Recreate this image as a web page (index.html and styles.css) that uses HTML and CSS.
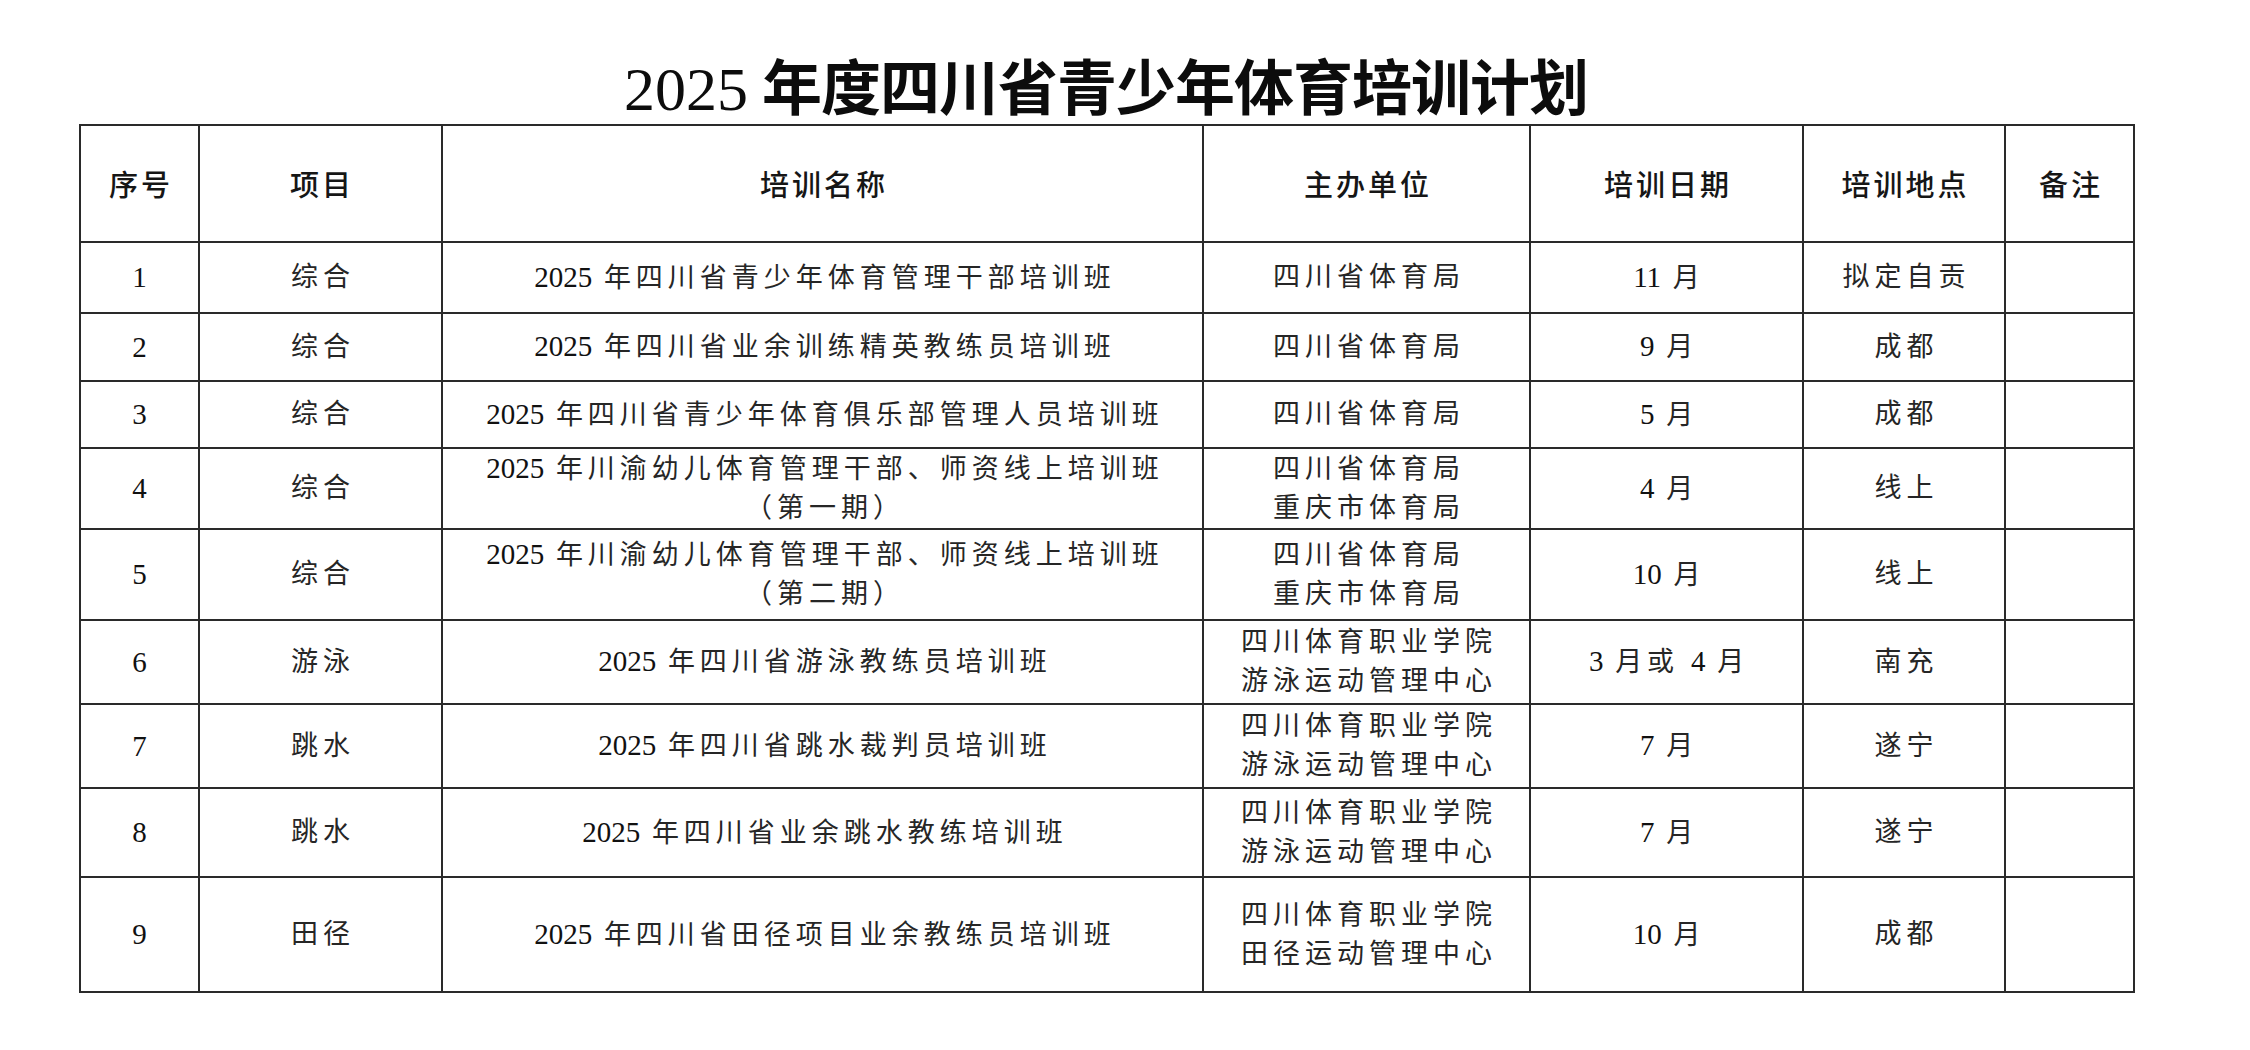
FILE: index.html
```html
<!DOCTYPE html>
<html lang="zh-CN">
<head>
<meta charset="utf-8">
<title>2025年度四川省青少年体育培训计划</title>
<link rel="stylesheet" href="styles.css">
</head>
<body>
<div class="page">
  <h1 class="title"><span class="yr">2025</span> 年度四川省青少年体育培训计划</h1>
  <table class="plan">
    <colgroup>
      <col class="c-no"><col class="c-item"><col class="c-name"><col class="c-org"><col class="c-date"><col class="c-place"><col class="c-note">
    </colgroup>
    <thead>
      <tr class="r-head">
        <th>序号</th><th>项目</th><th>培训名称</th><th>主办单位</th><th>培训日期</th><th>培训地点</th><th>备注</th>
      </tr>
    </thead>
    <tbody>
      <tr class="r1">
        <td class="num">1</td><td>综合</td><td><span class="d">2025</span> 年四川省青少年体育管理干部培训班</td><td>四川省体育局</td><td><span class="d">11</span> 月</td><td>拟定自贡</td><td></td>
      </tr>
      <tr class="r2">
        <td class="num">2</td><td>综合</td><td><span class="d">2025</span> 年四川省业余训练精英教练员培训班</td><td>四川省体育局</td><td><span class="d">9</span> 月</td><td>成都</td><td></td>
      </tr>
      <tr class="r3">
        <td class="num">3</td><td>综合</td><td><span class="d">2025</span> 年四川省青少年体育俱乐部管理人员培训班</td><td>四川省体育局</td><td><span class="d">5</span> 月</td><td>成都</td><td></td>
      </tr>
      <tr class="r4">
        <td class="num">4</td><td>综合</td><td class="ml"><span class="d">2025</span> 年川渝幼儿体育管理干部、师资线上培训班<br>（第一期）</td><td class="ml">四川省体育局<br>重庆市体育局</td><td><span class="d">4</span> 月</td><td>线上</td><td></td>
      </tr>
      <tr class="r5">
        <td class="num">5</td><td>综合</td><td class="ml"><span class="d">2025</span> 年川渝幼儿体育管理干部、师资线上培训班<br>（第二期）</td><td class="ml">四川省体育局<br>重庆市体育局</td><td><span class="d">10</span> 月</td><td>线上</td><td></td>
      </tr>
      <tr class="r6">
        <td class="num">6</td><td>游泳</td><td><span class="d">2025</span> 年四川省游泳教练员培训班</td><td class="ml">四川体育职业学院<br>游泳运动管理中心</td><td><span class="d">3</span> 月或 <span class="d">4</span> 月</td><td>南充</td><td></td>
      </tr>
      <tr class="r7">
        <td class="num">7</td><td>跳水</td><td><span class="d">2025</span> 年四川省跳水裁判员培训班</td><td class="ml">四川体育职业学院<br>游泳运动管理中心</td><td><span class="d">7</span> 月</td><td>遂宁</td><td></td>
      </tr>
      <tr class="r8">
        <td class="num">8</td><td>跳水</td><td><span class="d">2025</span> 年四川省业余跳水教练培训班</td><td class="ml">四川体育职业学院<br>游泳运动管理中心</td><td><span class="d">7</span> 月</td><td>遂宁</td><td></td>
      </tr>
      <tr class="r9">
        <td class="num">9</td><td>田径</td><td><span class="d">2025</span> 年四川省田径项目业余教练员培训班</td><td class="ml">四川体育职业学院<br>田径运动管理中心</td><td><span class="d">10</span> 月</td><td>成都</td><td></td>
      </tr>
    </tbody>
  </table>
</div>
</body>
</html>
```

FILE: styles.css
```css
html, body {
  margin: 0;
  padding: 0;
  background: #ffffff;
}

.page {
  width: 2250px;
  height: 1050px;
  overflow: hidden;
  padding-left: 79px;
  box-sizing: border-box;
}

.title {
  margin: 0;
  width: 2054px;
  height: 124px;
  box-sizing: border-box;
  padding-top: 61px;
  font-family: "Liberation Serif", "Noto Sans CJK SC", serif;
  font-size: 60px;
  line-height: 56px;
  font-weight: 700;
  letter-spacing: -1px;
  text-align: center;
  color: #0c0c0c;
  white-space: nowrap;
}

.title .yr {
  font-size: 62px;
  font-weight: 400;
  letter-spacing: 0;
}

.plan {
  border-collapse: collapse;
  table-layout: fixed;
  width: 2054px;
  font-family: "Liberation Serif", "Noto Sans CJK SC", serif;
  font-size: 27px;
  color: #262626;
}

.plan th,
.plan td {
  border: 2px solid #2a2a2a;
  padding: 0 0 0 5px;
  text-align: center;
  vertical-align: middle;
  letter-spacing: 5px;
  white-space: nowrap;
  line-height: 39px;
}

.plan th {
  font-family: "Noto Sans CJK SC", sans-serif;
  font-size: 29px;
  font-weight: 500;
  letter-spacing: 3px;
  padding-left: 3px;
  color: #161616;
}

.plan td.num {
  color: #111111;
  font-size: 29px;
}

.plan .d {
  letter-spacing: 0;
  font-size: 29px;
  color: #111111;
}

.c-no { width: 119px; }
.c-item { width: 243px; }
.c-name { width: 761px; }
.c-org { width: 327px; }
.c-date { width: 273px; }
.c-place { width: 202px; }
.c-note { width: 129px; }

.r-head { height: 117px; }
.r1 { height: 71px; }
.r2 { height: 68px; }
.r3 { height: 67px; }
.r4 { height: 81px; }
.r5 { height: 91px; }
.r6 { height: 84px; }
.r7 { height: 84px; }
.r8 { height: 89px; }
.r9 { height: 115px; }
```
